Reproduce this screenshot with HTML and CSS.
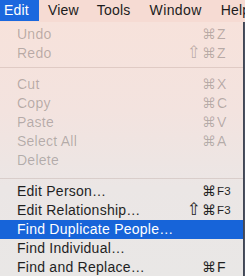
FILE: index.html
```html
<!DOCTYPE html>
<html>
<head>
<meta charset="utf-8">
<link rel="stylesheet" href="styles.css">
</head>
<body>
<div class="menubar">
  <span class="mb-item first active">Edit</span>
  <span class="mb-item">View</span>
  <span class="mb-item">Tools</span>
  <span class="mb-item wide">Window</span>
  <span class="mb-item">Help</span>
</div>
<div class="menu">
  <div class="group first-group">
    <div class="row disabled"><span class="label">Undo</span><span class="mods">⌘</span><span class="key">Z</span></div>
    <div class="row disabled"><span class="label">Redo</span><span class="mods"><span class="shift">⇧</span>⌘</span><span class="key">Z</span></div>
  </div>
  <div class="sep sep-a"></div>
  <div class="group">
    <div class="row disabled"><span class="label">Cut</span><span class="mods">⌘</span><span class="key">X</span></div>
    <div class="row disabled"><span class="label">Copy</span><span class="mods">⌘</span><span class="key">C</span></div>
    <div class="row disabled"><span class="label">Paste</span><span class="mods">⌘</span><span class="key">V</span></div>
    <div class="row disabled"><span class="label">Select All</span><span class="mods">⌘</span><span class="key">A</span></div>
    <div class="row disabled"><span class="label">Delete</span><span class="mods"></span><span class="key"></span></div>
  </div>
  <div class="sep sep-b"></div>
  <div class="group">
    <div class="row"><span class="label">Edit Person…</span><span class="mods">⌘</span><span class="key small">F3</span></div>
    <div class="row"><span class="label">Edit Relationship…</span><span class="mods"><span class="shift">⇧</span>⌘</span><span class="key small">F3</span></div>
    <div class="row selected"><span class="label">Find Duplicate People…</span><span class="mods"></span><span class="key"></span></div>
    <div class="row"><span class="label">Find Individual…</span><span class="mods"></span><span class="key"></span></div>
    <div class="row"><span class="label">Find and Replace…</span><span class="mods">⌘</span><span class="key">F</span></div>
  </div>
</div>
</body>
</html>
```
FILE: styles.css
```css
html, body {
  margin: 0;
  padding: 0;
}
body {
  width: 245px;
  height: 276px;
  overflow: hidden;
  background: #4a5060;
  font-family: "Liberation Sans", Arial, sans-serif;
  font-size: 14px;
  color: #1f1f1f;
}
.menubar {
  height: 22px;
  display: flex;
  background: #f6dbd3;
  white-space: nowrap;
  overflow: hidden;
}
.mb-item {
  line-height: 21px;
  padding: 0 9px;
  letter-spacing: 0.2px;
  color: #1c1c1c;
}
.mb-item.first {
  padding: 0 10px 0 4px;
}
.mb-item.wide {
  padding: 0 10px 0 10px;
  letter-spacing: 0.4px;
}
.mb-item.active {
  background: #1b68de;
  color: #fff;
  height: 21px;
}
.menu {
  width: 243px;
  height: 254px;
  padding-top: 3px;
  box-sizing: border-box;
  background: linear-gradient(180deg, #f7e2db 0%, #f3e3df 35%, #ebe6e5 65%, #e9e7e6 100%);
  box-shadow: 1px 0 0 rgba(0,0,0,0.12);
}
.row {
  display: grid;
  grid-template-columns: 1fr auto 26px;
  height: 19px;
  line-height: 19px;
  padding-left: 17px;
  letter-spacing: 0.25px;
  white-space: nowrap;
}
.mods {
  font-family: "DejaVu Sans", sans-serif;
  font-size: 14px;
  text-align: right;
  letter-spacing: 1px;
}
.shift {
  font-size: 17px;
  line-height: 0;
  letter-spacing: 0;
  margin-right: 1px;
}
.key {
  padding-left: 0;
}
.key.small {
  font-size: 11.5px;
}
.disabled {
  color: rgba(0,0,0,0.26);
}
.selected {
  background: #1764d9;
  color: #fff;
}
.sep {
  height: 1px;
  background: rgba(120,80,70,0.16);
}
.sep-a {
  margin: 4px 0 7px;
}
.sep-b {
  margin: 8px 0 3px;
}
```
